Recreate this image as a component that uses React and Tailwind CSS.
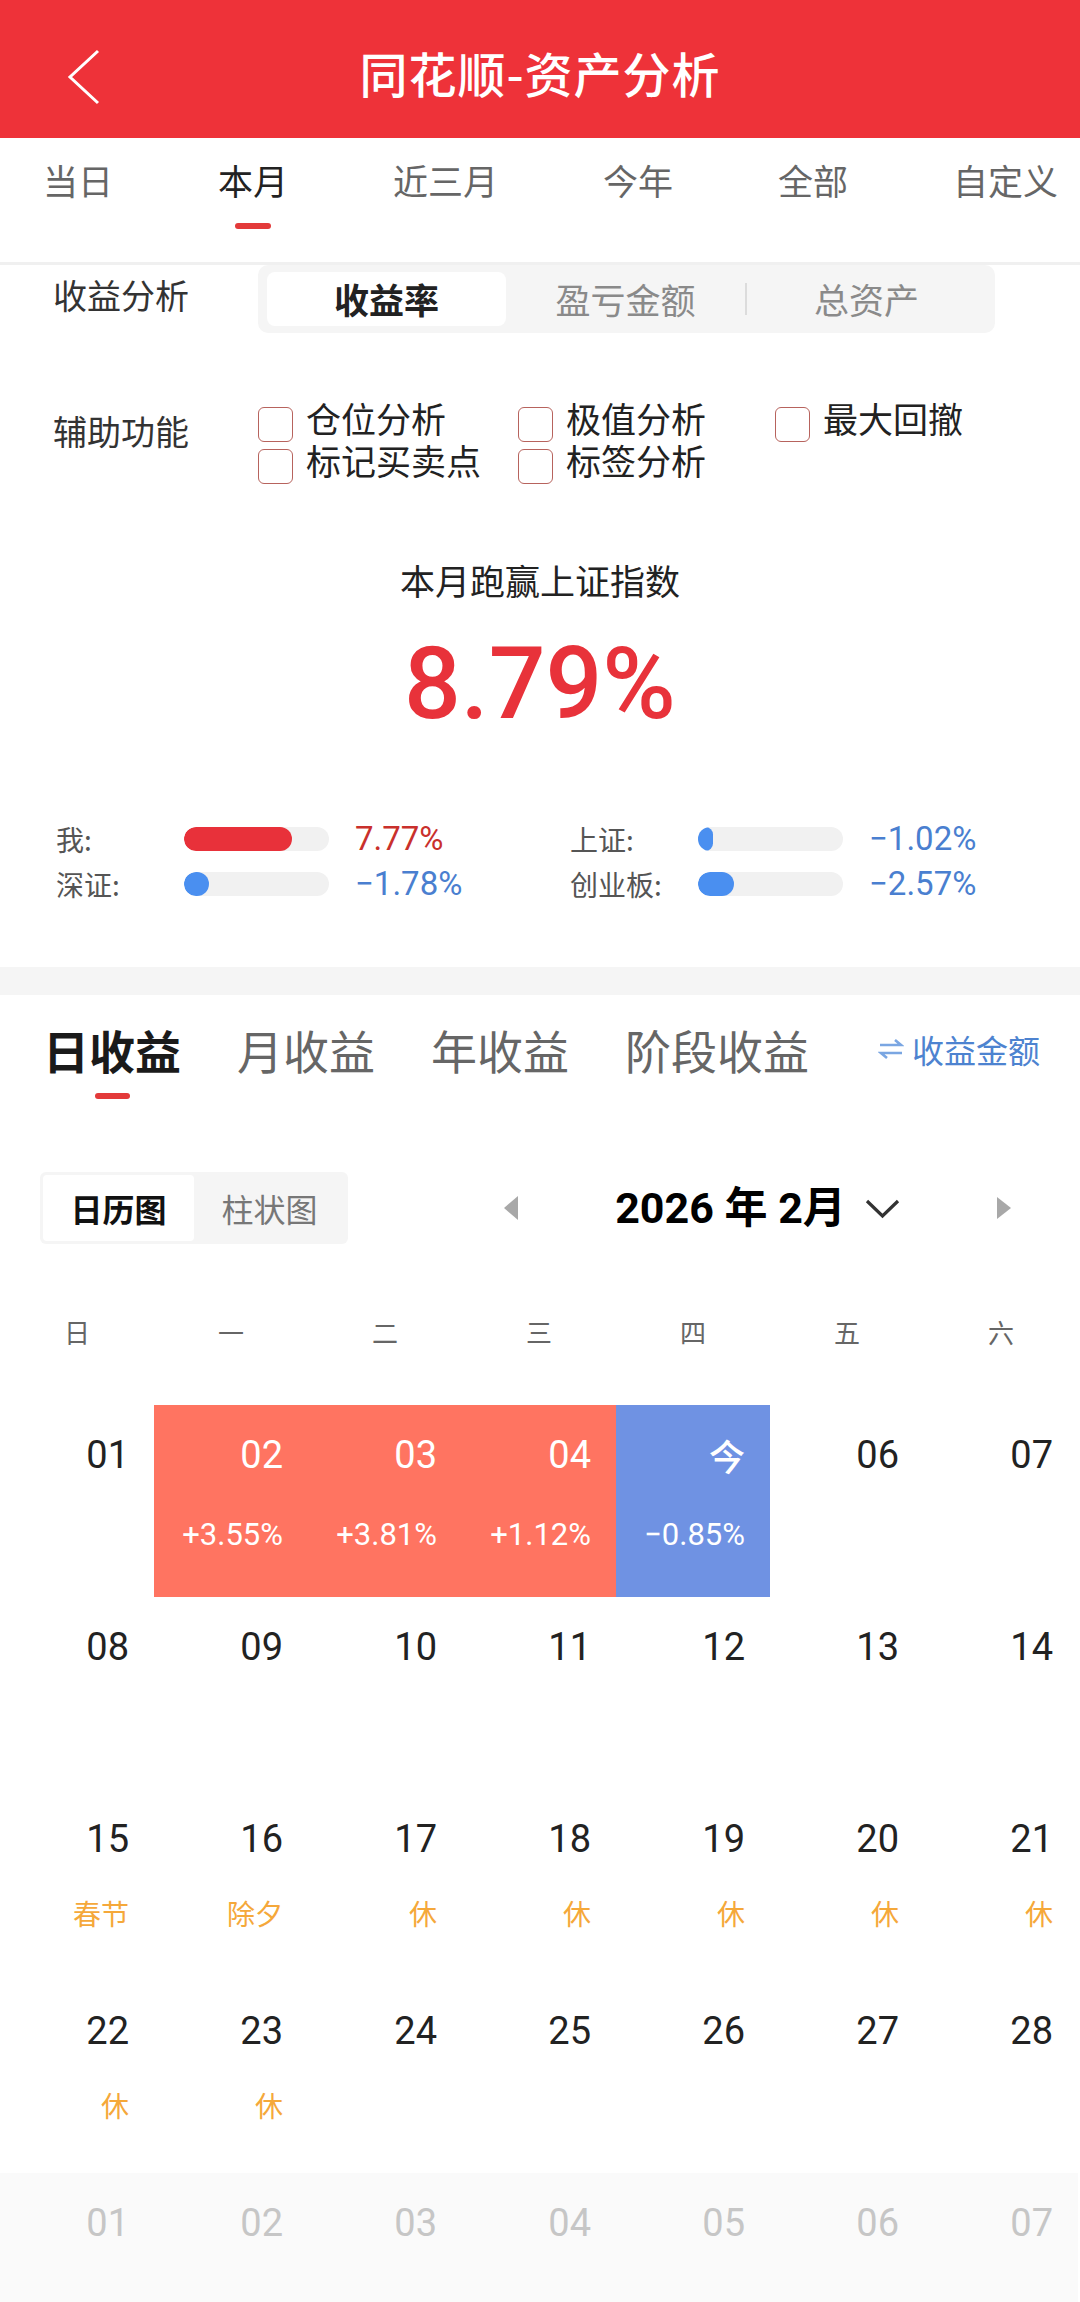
import React from "react";

const cn = "font-['Noto_Sans_CJK_SC',sans-serif]";
const num = "font-[family-name:Roboto,'Noto_Sans_CJK_SC',sans-serif]";

const periodTabs = ["当日", "本月", "近三月", "今年", "全部", "自定义"];
const helpers = ["仓位分析", "极值分析", "最大回撤", "标记买卖点", "标签分析"];
const compare = [
  { label: "我:", fill: 108, color: "bg-[#e8313a]", value: "7.77%", text: "text-[#c9302c]" },
  { label: "上证:", fill: 15, color: "bg-[#4a8ff0]", value: "−1.02%", text: "text-[#4a7fd0]" },
  { label: "深证:", fill: 25, color: "bg-[#4a8ff0]", value: "−1.78%", text: "text-[#4a7fd0]" },
  { label: "创业板:", fill: 36, color: "bg-[#4a8ff0]", value: "−2.57%", text: "text-[#4a7fd0]" },
];
const weekDays = ["日", "一", "二", "三", "四", "五", "六"];

// 日历数据: kind = up / down / next
const days = [
  { d: "01" },
  { d: "02", sub: "+3.55%", kind: "up" },
  { d: "03", sub: "+3.81%", kind: "up" },
  { d: "04", sub: "+1.12%", kind: "up" },
  { d: "今", sub: "−0.85%", kind: "down" },
  { d: "06" },
  { d: "07" },
  { d: "08" }, { d: "09" }, { d: "10" }, { d: "11" }, { d: "12" }, { d: "13" }, { d: "14" },
  { d: "15", note: "春节" },
  { d: "16", note: "除夕" },
  { d: "17", note: "休" },
  { d: "18", note: "休" },
  { d: "19", note: "休" },
  { d: "20", note: "休" },
  { d: "21", note: "休" },
  { d: "22", note: "休" },
  { d: "23", note: "休" },
  { d: "24" }, { d: "25" }, { d: "26" }, { d: "27" }, { d: "28" },
  { d: "01", kind: "next" }, { d: "02", kind: "next" }, { d: "03", kind: "next" },
  { d: "04", kind: "next" }, { d: "05", kind: "next" }, { d: "06", kind: "next" },
  { d: "07", kind: "next" },
];

const DayCell = ({ item }) => {
  const bg =
    item.kind === "up"
      ? "bg-[#ff7461]"
      : item.kind === "down"
      ? "bg-[#6f92e3]"
      : item.kind === "next"
      ? "bg-[#fafafa]"
      : "";
  const colored = item.kind === "up" || item.kind === "down";
  const numColor = colored ? "text-white" : item.kind === "next" ? "text-[#c6c6c6]" : "text-[#222]";
  return (
    <div className={`h-[192px] flex flex-col items-end pr-[25px] ${bg}`}>
      <span
        className={`pt-[28px] leading-[44px] ${numColor} ${
          item.d === "今" ? `${cn} text-[36px] font-medium` : `${num} text-[38px]`
        }`}
      >
        {item.d}
      </span>
      {item.sub && (
        <span className={`${num} mt-[40px] leading-[36px] text-[31px] text-white`}>{item.sub}</span>
      )}
      {item.note && (
        <span className={`${cn} mt-[34px] leading-[36px] text-[28px] text-[#f5a83a]`}>{item.note}</span>
      )}
    </div>
  );
};

export default function App() {
  return (
    <div className={`w-[1080px] min-h-[2302px] bg-white overflow-hidden ${cn}`}>
      {/* 顶部标题栏 */}
      <div className="relative h-[138px] bg-[#ee3239] flex items-center justify-center pt-[6px]">
        <svg className="absolute left-[64px] top-[48px]" width="38" height="58" viewBox="0 0 38 58">
          <path d="M34 3 L6 29 L34 55" stroke="white" strokeWidth="3" fill="none" />
        </svg>
        <h1 className="text-[48px] leading-none tracking-[1px] text-white font-medium">同花顺-资产分析</h1>
      </div>

      {/* 时间段选择 */}
      <div className="flex gap-[105px] pl-[43px] pt-[24px] h-[127px] border-b-[3px] border-[#f0f0f0]">
        {periodTabs.map((t) => (
          <div key={t} className="flex flex-col items-center">
            <span className={`text-[35px] leading-[36px] whitespace-nowrap ${t === "本月" ? "text-[#222]" : "text-[#666]"}`}>
              {t}
            </span>
            {t === "本月" && <div className="mt-[25px] w-[36px] h-[6px] rounded-full bg-[#e33a3a]" />}
          </div>
        ))}
      </div>

      {/* 收益分析 */}
      <div className="flex items-center pl-[53px]">
        <div className="w-[205px] pb-[8px] text-[34px] leading-[44px] text-[#333]">收益分析</div>
        <div className="w-[737px] h-[68px] bg-[#f5f5f5] rounded-[10px] px-[9px] py-[7px] flex items-center">
          <div className="flex-1 h-full bg-white rounded-[8px] flex items-center justify-center text-[35px] font-bold text-[#222]">
            收益率
          </div>
          <div className="flex-1 h-full flex items-center justify-center text-[35px] text-[#8a8a8a]">盈亏金额</div>
          <div className="w-[2px] h-[32px] bg-[#dcdcdc]" />
          <div className="flex-1 h-full flex items-center justify-center text-[35px] text-[#8a8a8a]">总资产</div>
        </div>
      </div>

      {/* 辅助功能 */}
      <div className="flex items-start pl-[53px] mt-[71px]">
        <span className="w-[205px] mt-[6px] text-[34px] leading-[42px] text-[#333]">辅助功能</span>
        <div className="grid grid-cols-[260px_257px_auto]">
          {helpers.map((h) => (
            <div key={h} className="flex items-start h-[42px] gap-[13px]">
              <div className="mt-[3px] w-[35px] h-[35px] rounded-[6px] border-[1.5px] border-[#b7635d]" />
              <span className="-mt-[4px] text-[35px] leading-[36px] text-[#222] whitespace-nowrap">{h}</span>
            </div>
          ))}
        </div>
      </div>

      {/* 跑赢指数 */}
      <div className="mt-[68px] flex flex-col items-center">
        <span className="text-[35px] leading-[48px] text-[#222]">本月跑赢上证指数</span>
        <span className={`${num} mt-[30px] text-[100px] leading-none font-medium text-[#e8323a]`}>8.79%</span>
      </div>

      {/* 对比条 */}
      <div className="mt-[82px] pl-[56px] grid grid-cols-[514px_auto]">
        {compare.map((c) => (
          <div key={c.label} className="flex items-center h-[45px]">
            <span className="w-[128px] text-[28px] text-[#555] whitespace-nowrap">{c.label}</span>
            <div className="w-[145px] h-[24px] rounded-full bg-[#f1f1f1] overflow-hidden">
              <div className={`h-full rounded-full ${c.color}`} style={{ width: c.fill }} />
            </div>
            <span className={`${num} ml-[26px] text-[33px] leading-[45px] ${c.text}`}>{c.value}</span>
          </div>
        ))}
      </div>

      <div className="mt-[61px] h-[28px] bg-[#f5f5f5]" />

      {/* 收益类型 */}
      <div className="flex items-start pl-[43px] pr-[40px] pt-[24px]">
        <div className="flex gap-[56px]">
          {["日收益", "月收益", "年收益", "阶段收益"].map((t, i) => (
            <div key={t} className="flex flex-col items-center">
              <span
                className={`text-[46px] leading-[60px] whitespace-nowrap ${
                  i === 0 ? "font-bold text-[#1a1a1a]" : "text-[#666]"
                }`}
              >
                {t}
              </span>
              {i === 0 && <div className="mt-[14px] w-[35px] h-[6px] rounded-full bg-[#e33a3a]" />}
            </div>
          ))}
        </div>
        <div className="ml-auto h-[60px] flex items-center gap-[8px] text-[32px] text-[#4d83d0]">
          <svg width="26" height="22" viewBox="0 0 26 22" fill="none" stroke="#7aa6e2" strokeWidth="2.6">
            <path d="M2 7 H23 L17 2" />
            <path d="M24 15 H3 L9 20" />
          </svg>
          <span>收益金额</span>
        </div>
      </div>

      {/* 日历图 / 月份 */}
      <div className="mt-[73px] flex items-center pl-[40px]">
        <div className="w-[308px] h-[72px] bg-[#f5f5f5] rounded-[6px] p-[3px] flex">
          <div className="w-[151px] bg-white rounded-[4px] flex items-center justify-center text-[32px] font-bold text-[#111]">
            日历图
          </div>
          <div className="flex-1 flex items-center justify-center text-[32px] text-[#777]">柱状图</div>
        </div>
        <div className="ml-[155px] flex items-center">
          <svg width="16" height="26" viewBox="0 0 16 26">
            <path d="M15 1 L1 13 L15 25 Z" fill="#a8a8a8" />
          </svg>
          <div className="w-[477px] flex items-center justify-center gap-[19px]">
            <span className={`${num} text-[43px] font-bold text-black leading-[50px]`}>2026 年 2月</span>
            <svg width="35" height="21" viewBox="0 0 35 21" fill="none" stroke="#333" strokeWidth="3.2">
              <path d="M2 3 L17.5 18 L33 3" />
            </svg>
          </div>
          <svg width="16" height="24" viewBox="0 0 16 24">
            <path d="M1 1 L15 12 L1 23 Z" fill="#a8a8a8" />
          </svg>
        </div>
      </div>

      {/* 星期 */}
      <div className="mt-[70px] w-[1078px] grid grid-cols-7">
        {weekDays.map((w) => (
          <span key={w} className="text-center text-[26px] leading-[36px] text-[#666]">
            {w}
          </span>
        ))}
      </div>

      {/* 日历 */}
      <div className="mt-[55px] w-[1078px] grid grid-cols-7">
        {days.map((item, i) => (
          <DayCell key={i} item={item} />
        ))}
      </div>
    </div>
  );
}
